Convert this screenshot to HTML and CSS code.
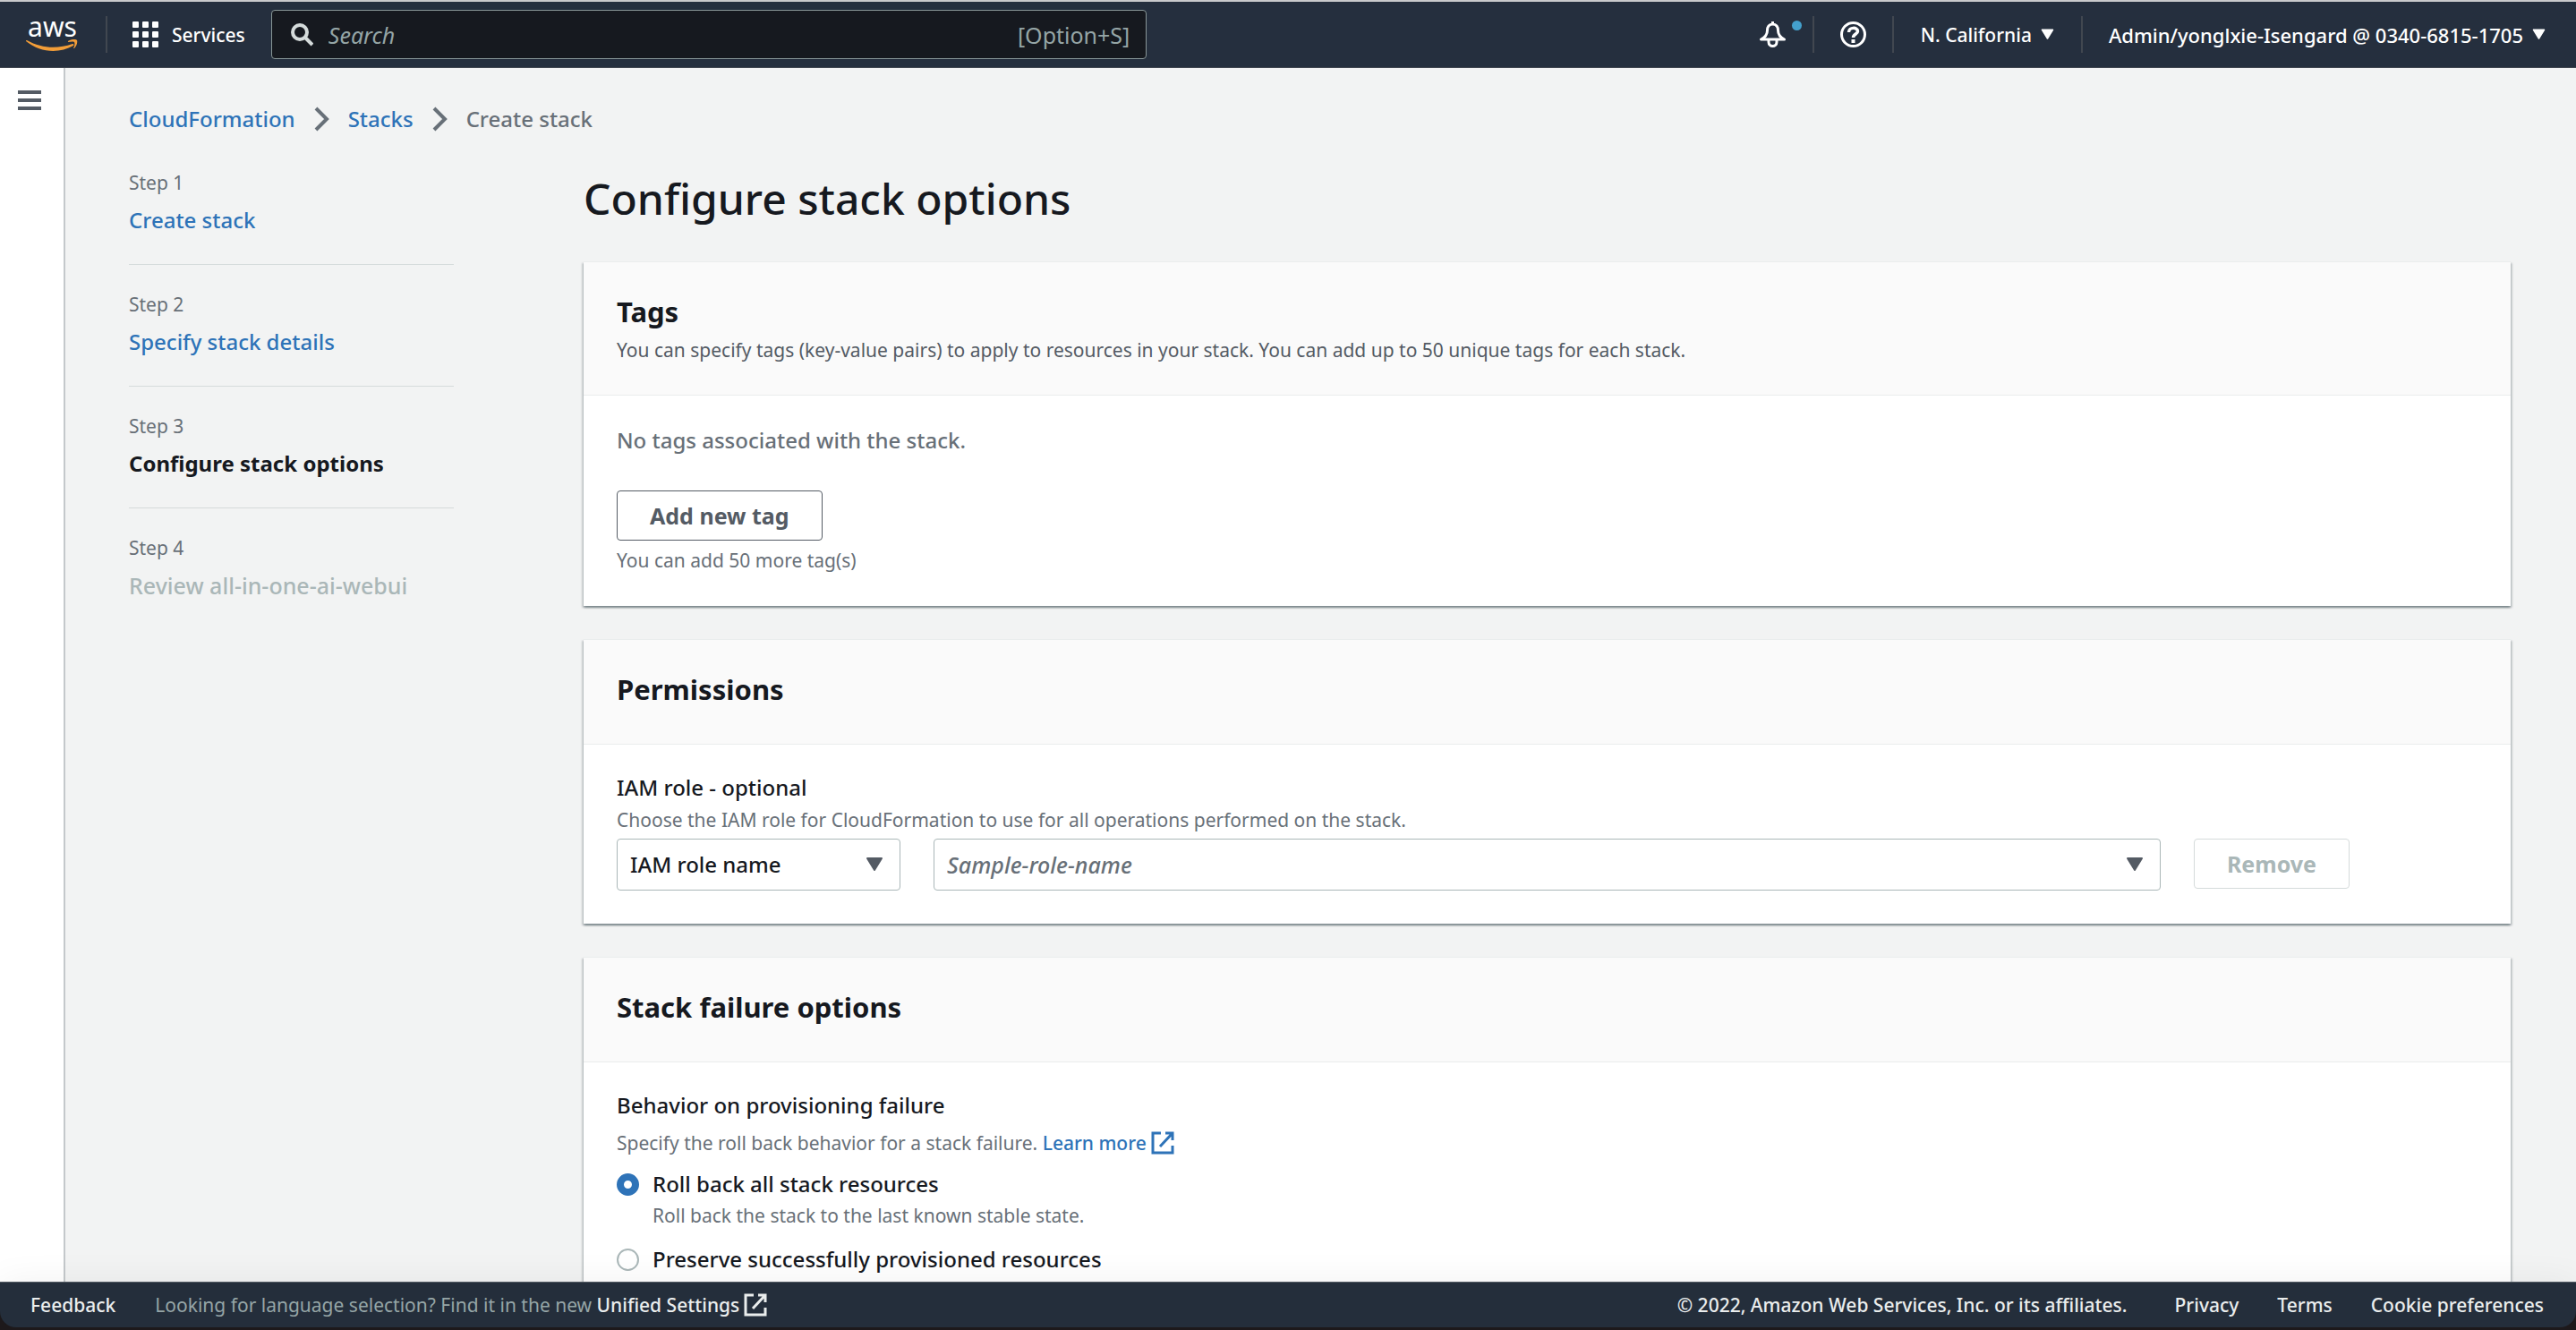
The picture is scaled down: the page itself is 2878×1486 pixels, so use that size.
FILE: index.html
```html
<!DOCTYPE html>
<html lang="en">
<head>
<meta charset="utf-8">
<meta name="viewport" content="width=device-width, initial-scale=1">
<title>CloudFormation - Create stack</title>
<link rel="stylesheet" href="styles.css">
</head>
<body>
<svg class="sprite" aria-hidden="true">
  <symbol id="external" viewBox="0 0 26 26"><path d="M11 2H2v22h22v-8M16 2h8v8M24 2 10 17" fill="none" stroke="currentColor" stroke-width="3"/></symbol>
  <symbol id="chevron" viewBox="0 0 17 28"><path d="M2 2 14 14 2 26" fill="none" stroke="currentColor" stroke-width="4"/></symbol>
  <symbol id="caret" viewBox="0 0 20 16"><path d="M2 1h16L10 14z" fill="currentColor" stroke="currentColor" stroke-width="2" stroke-linejoin="round"/></symbol>
</svg>
<div class="app">
  <header class="topnav">
    <a class="logo" href="#" aria-label="AWS home">
      <span class="logo-word">aws</span>
      <svg class="logo-smile" viewBox="0 0 59 14"><path d="M1 1c16 9 34 10 51 4 1 0 2 1 1 2C37 16 16 15 0 2 0 1 0 1 1 1zM47 2c3-2 8-3 10-1 1 3-1 7-3 9h-1c1-2 2-5 1-7-2-1-5 0-7 0z" fill="#f29d38"/></svg>
    </a>
    <span class="divider"></span>
    <button class="nav-item services" type="button">
      <svg class="icon-lg" viewBox="0 0 29 29" fill="#fff"><rect width="7" height="7" rx="1"/><rect x="11" width="7" height="7" rx="1"/><rect x="22" width="7" height="7" rx="1"/><rect y="11" width="7" height="7" rx="1"/><rect x="11" y="11" width="7" height="7" rx="1"/><rect x="22" y="11" width="7" height="7" rx="1"/><rect y="22" width="7" height="7" rx="1"/><rect x="11" y="22" width="7" height="7" rx="1"/><rect x="22" y="22" width="7" height="7" rx="1"/></svg>
      Services
    </button>
    <label class="search">
      <svg class="search-icon" viewBox="0 0 25 26" fill="none" stroke="#d5dbdb" stroke-width="4"><circle cx="10" cy="10" r="8"/><path d="m16 16 8 8"/></svg>
      <input type="search" placeholder="Search" aria-label="Search">
      <span class="shortcut">[Option+S]</span>
    </label>
    <div class="nav-right">
      <button class="nav-item bell" type="button" aria-label="Notifications">
        <svg class="icon-lg" viewBox="0 0 29 29" fill="none" stroke="#fff" stroke-width="3" stroke-linejoin="round"><path d="M14.500 3c-4 0-6 3-6 7 0 5-3 8-7 10h26c-4-2-7-5-7-10 0-4-2-7-6-7zM14.500 0v4M10 21v2c0 6 9 6 9 0v-2"/></svg>
        <span class="dot"></span>
      </button>
      <span class="divider"></span>
      <button class="nav-item help" type="button" aria-label="Help">
        <svg class="icon-lg" viewBox="0 0 29 29" fill="none" stroke="#fff" stroke-width="3"><circle cx="14.500" cy="14.500" r="13"/><path d="M9.500 12c0-6 10-6 10-1 0 3-5 3-5 7" stroke-width="3.500"/><path d="M14.500 20v4" stroke-width="4"/></svg>
      </button>
      <span class="divider"></span>
      <button class="nav-item region" type="button">N. California <svg class="caret-sm"><use href="#caret"/></svg></button>
      <span class="divider"></span>
      <button class="nav-item account" type="button">Admin/yonglxie-Isengard @ 0340-6815-1705 <svg class="caret-sm"><use href="#caret"/></svg></button>
    </div>
  </header>

  <div class="body">
    <aside class="rail">
      <button class="menu" type="button" aria-label="Open navigation"><svg viewBox="0 0 26 22" fill="#545b64"><path d="M0 0h26v4H0zM0 9h26v4H0zM0 18h26v4H0z"/></svg></button>
    </aside>
    <main class="content">
      <nav class="crumbs" aria-label="Breadcrumbs">
        <a href="#">CloudFormation</a>
        <svg class="chevron"><use href="#chevron"/></svg>
        <a href="#">Stacks</a>
        <svg class="chevron"><use href="#chevron"/></svg>
        <span>Create stack</span>
      </nav>
      <div class="wizard">
        <ol class="steps">
          <li><span class="step-no">Step 1</span><a class="step-name" href="#">Create stack</a></li>
          <li><span class="step-no">Step 2</span><a class="step-name" href="#">Specify stack details</a></li>
          <li><span class="step-no">Step 3</span><span class="step-name current">Configure stack options</span></li>
          <li><span class="step-no">Step 4</span><span class="step-name pending">Review all-in-one-ai-webui</span></li>
        </ol>
        <div class="panels">
          <h1>Configure stack options</h1>
          <section class="card">
            <div class="card-head">
              <h2>Tags</h2>
              <p>You can specify tags (key-value pairs) to apply to resources in your stack. You can add up to 50 unique tags for each stack.</p>
            </div>
            <div class="card-body">
              <p class="empty">No tags associated with the stack.</p>
              <button class="btn" type="button">Add new tag</button>
              <p class="hint count">You can add 50 more tag(s)</p>
            </div>
          </section>
          <section class="card">
            <div class="card-head"><h2>Permissions</h2></div>
            <div class="card-body">
              <label class="field-label" for="role-kind">IAM role - optional</label>
              <p class="hint role-hint">Choose the IAM role for CloudFormation to use for all operations performed on the stack.</p>
              <div class="role-row">
                <div class="picker kind">
                  <select id="role-kind"><option>IAM role name</option></select>
                  <svg class="caret"><use href="#caret"/></svg>
                </div>
                <div class="picker role">
                  <select class="placeholder" aria-label="Role"><option>Sample-role-name</option></select>
                  <svg class="caret"><use href="#caret"/></svg>
                </div>
                <button class="btn" type="button" disabled>Remove</button>
              </div>
            </div>
          </section>
          <section class="card">
            <div class="card-head"><h2>Stack failure options</h2></div>
            <div class="card-body">
              <p class="field-label">Behavior on provisioning failure</p>
              <p class="hint learn">Specify the roll back behavior for a stack failure. <a href="#">Learn more <svg class="external"><use href="#external"/></svg></a></p>
              <div class="choice">
                <input type="radio" name="failure" id="rollback" checked>
                <label for="rollback">Roll back all stack resources</label>
                <p class="hint">Roll back the stack to the last known stable state.</p>
              </div>
              <div class="choice">
                <input type="radio" name="failure" id="preserve">
                <label for="preserve">Preserve successfully provisioned resources</label>
              </div>
            </div>
          </section>
        </div>
      </div>
    </main>
  </div>

  <footer class="footer">
    <a href="#">Feedback</a>
    <span class="language">Looking for language selection? Find it in the new <a href="#">Unified Settings<svg class="external"><use href="#external"/></svg></a></span>
    <span class="legal">© 2022, Amazon Web Services, Inc. or its affiliates.</span>
    <a href="#">Privacy</a>
    <a href="#">Terms</a>
    <a href="#">Cookie preferences</a>
  </footer>
</div>
</body>
</html>
```
FILE: styles.css
```css
* { box-sizing: border-box; }

:root {
  --small: 21px;
  --body: 24px;
  --ink: #16191f;
  --muted: #687078;
  --link: #2e73b8;
  --nav: #252f3e;
}

body {
  margin: 0;
  background: #1d191b;
  color: var(--ink);
  font: 500 var(--body)/40px "Noto Sans", "Open Sans", sans-serif;
}

h1, h2, p, ol { margin: 0; padding: 0; }
button, input, select { font: inherit; color: inherit; }
a { color: var(--link); text-decoration: none; }
svg { display: block; flex: none; }
.sprite { position: absolute; width: 0; height: 0; }

.app {
  display: flex;
  flex-direction: column;
  height: calc(100vh - 3px);
  border-top: 2px solid #c9c9cb;
  border-radius: 0 0 18px 18px;
  overflow: hidden;
}

/* Top navigation */
.topnav {
  flex: none;
  display: flex;
  align-items: center;
  height: 74px;
  padding: 0 34px 0 29px;
  border-bottom: 1px solid #414750;
  background: var(--nav);
  color: #fff;
}
.divider { flex: none; width: 2px; height: 41px; background: #414750; }
.logo { width: 59px; margin-right: 30px; color: #fff; }
.logo-word { display: block; height: 24px; font-size: 30px; font-weight: 400; line-height: 20px; text-align: center; }
.logo-smile { width: 59px; height: 14px; }
.nav-item {
  display: flex;
  align-items: center;
  gap: 10px;
  padding: 0 30px;
  border: 0;
  background: none;
  font-size: var(--small);
  font-weight: 500;
  white-space: nowrap;
}
.services { gap: 15px; padding-left: 28px; padding-right: 29px; }
.icon-lg { width: 29px; height: 29px; overflow: visible; }
.search {
  display: flex;
  align-items: center;
  width: 34vw;
  height: 55px;
  padding: 0 18px 0 21px;
  border: 1px solid #879596;
  border-radius: 4px;
  background: #16191f;
  color: #95a5a6;
  font-weight: 400;
}
.search-icon { width: 25px; height: 26px; margin-right: 17px; }
.search input { flex: 1; min-width: 0; padding: 0; border: 0; outline: 0; background: none; font-size: 25px; }
.search input::placeholder { color: #95a5a6; font-style: italic; opacity: 1; }
.shortcut { font-size: 25px; }
.nav-right { display: flex; align-items: center; margin-left: auto; }
.bell { position: relative; }
.dot { position: absolute; top: -1px; right: 12px; width: 11px; height: 11px; border-radius: 50%; background: #44a0cc; }
.help { padding: 0 29px; }
.account { padding-left: 29px; padding-right: 0; font-size: 22px; }
.caret-sm { width: 15px; height: 13px; }

/* Page body */
.body { flex: 1; display: flex; min-height: 0; background: #f2f3f3; }
.rail { flex: none; width: 73px; padding: 25px 20px; border-right: 2px solid #c4c8cb; background: #fff; }
.menu { display: block; padding: 0; border: 0; background: none; }
.menu svg { width: 26px; height: 22px; }
.content { flex: 1; min-width: 0; padding: 37px 73px 0 71px; overflow: hidden; }

.crumbs { display: flex; align-items: center; gap: 21px; height: 40px; color: var(--muted); }
.chevron { width: 17px; height: 28px; }

.wizard { display: grid; grid-template-columns: 363px 1fr; gap: 145px; margin-top: 35px; }
.steps { list-style: none; }
.steps li { display: flex; flex-direction: column; gap: 6px; padding-bottom: 29px; }
.steps li + li { padding-top: 28px; border-top: 1px solid #d5dbdb; }
.step-no { color: var(--muted); font-size: var(--small); font-weight: 400; line-height: 32px; }
.current { font-weight: 700; }
.pending { color: #aab7b8; font-size: 25px; }

h1 { margin-bottom: 36px; font-size: 48px; font-weight: 500; line-height: 68px; }
.card {
  margin-bottom: 37px;
  background: #fff;
  box-shadow: 0 2px 2px rgba(0, 28, 36, .3), 2px 2px 2px rgba(0, 28, 36, .15), -2px 2px 2px rgba(0, 28, 36, .15);
}
.card-head { padding: 35px 37px 34px; border-top: 1px solid #eaeded; border-bottom: 1px solid #eaeded; background: #fafafa; }
.card-head h2 { margin-bottom: 7px; font-size: 31px; font-weight: 700; line-height: 40px; }
.card-head p { color: #545b64; font-size: var(--small); font-weight: 400; line-height: 32px; }
.card-body { padding: 30px 37px 35px; }
.empty { margin-bottom: 36px; color: var(--muted); }
.hint { color: var(--muted); font-size: var(--small); font-weight: 400; line-height: 32px; }
.count { margin-top: 6px; }
.btn {
  display: block;
  height: 56px;
  padding: 0 36px;
  border: 1px solid #545b64;
  border-radius: 4px;
  background: #fff;
  color: #545b64;
  font-size: 25px;
  font-weight: 700;
}
.btn:disabled { border-color: #d5dbdb; color: #aab7b8; }

.field-label { display: block; line-height: 36px; }
.role-hint { margin: 2px 0 5px; }
.role-row { display: grid; grid-template-columns: 317px 1fr auto; gap: 37px; padding-bottom: 2px; margin-right: 143px; }
.picker { display: grid; align-items: center; }
.picker > * { grid-area: 1 / 1; }
.picker select {
  width: 100%;
  height: 58px;
  padding: 0 14px;
  border: 1px solid #aab7b8;
  border-radius: 4px;
  appearance: none;
  background: #fff;
}
.picker .placeholder { color: var(--muted); font-size: 25px; font-style: italic; }
.caret { width: 20px; height: 16px; margin-right: 19px; justify-self: end; color: #545b64; pointer-events: none; }

.learn { margin: 8px 0 12px; }
.learn a { font-weight: 500; }
.external { display: inline-block; width: 26px; height: 26px; vertical-align: -5px; }
.choice { display: grid; grid-template-columns: 25px 1fr; column-gap: 15px; row-gap: 1px; align-items: center; margin-bottom: 15px; }
.choice label { line-height: 36px; }
.choice .hint { grid-column: 2; }
.choice input { width: 25px; height: 25px; margin: 0; border: 2px solid #aab7b8; border-radius: 50%; appearance: none; background: #fff; }
.choice input:checked { border: 8px solid #2e73b8; }
/* Card keeps going below the fold */
.card:last-child .card-body { padding-bottom: 120px; }

/* Footer */
.footer {
  position: relative;
  flex: none;
  display: flex;
  align-items: center;
  height: 51px;
  padding: 0 36px 0 34px;
  border-top: 1px solid #545b64;
  background: #242e3b;
  box-shadow: 0 0 40px rgba(0, 0, 0, .06);
  color: #eaeded;
  font-size: var(--small);
  white-space: nowrap;
}
.footer a { color: #eaeded; }
.language { margin-left: 44px; color: #95a5a6; font-weight: 400; }
.language a { font-weight: 500; }
.language .external { margin-left: 5px; }
.legal { margin-left: auto; }
.legal ~ a { margin-left: 43px; }
.legal + a { margin-left: 53px; }
```
